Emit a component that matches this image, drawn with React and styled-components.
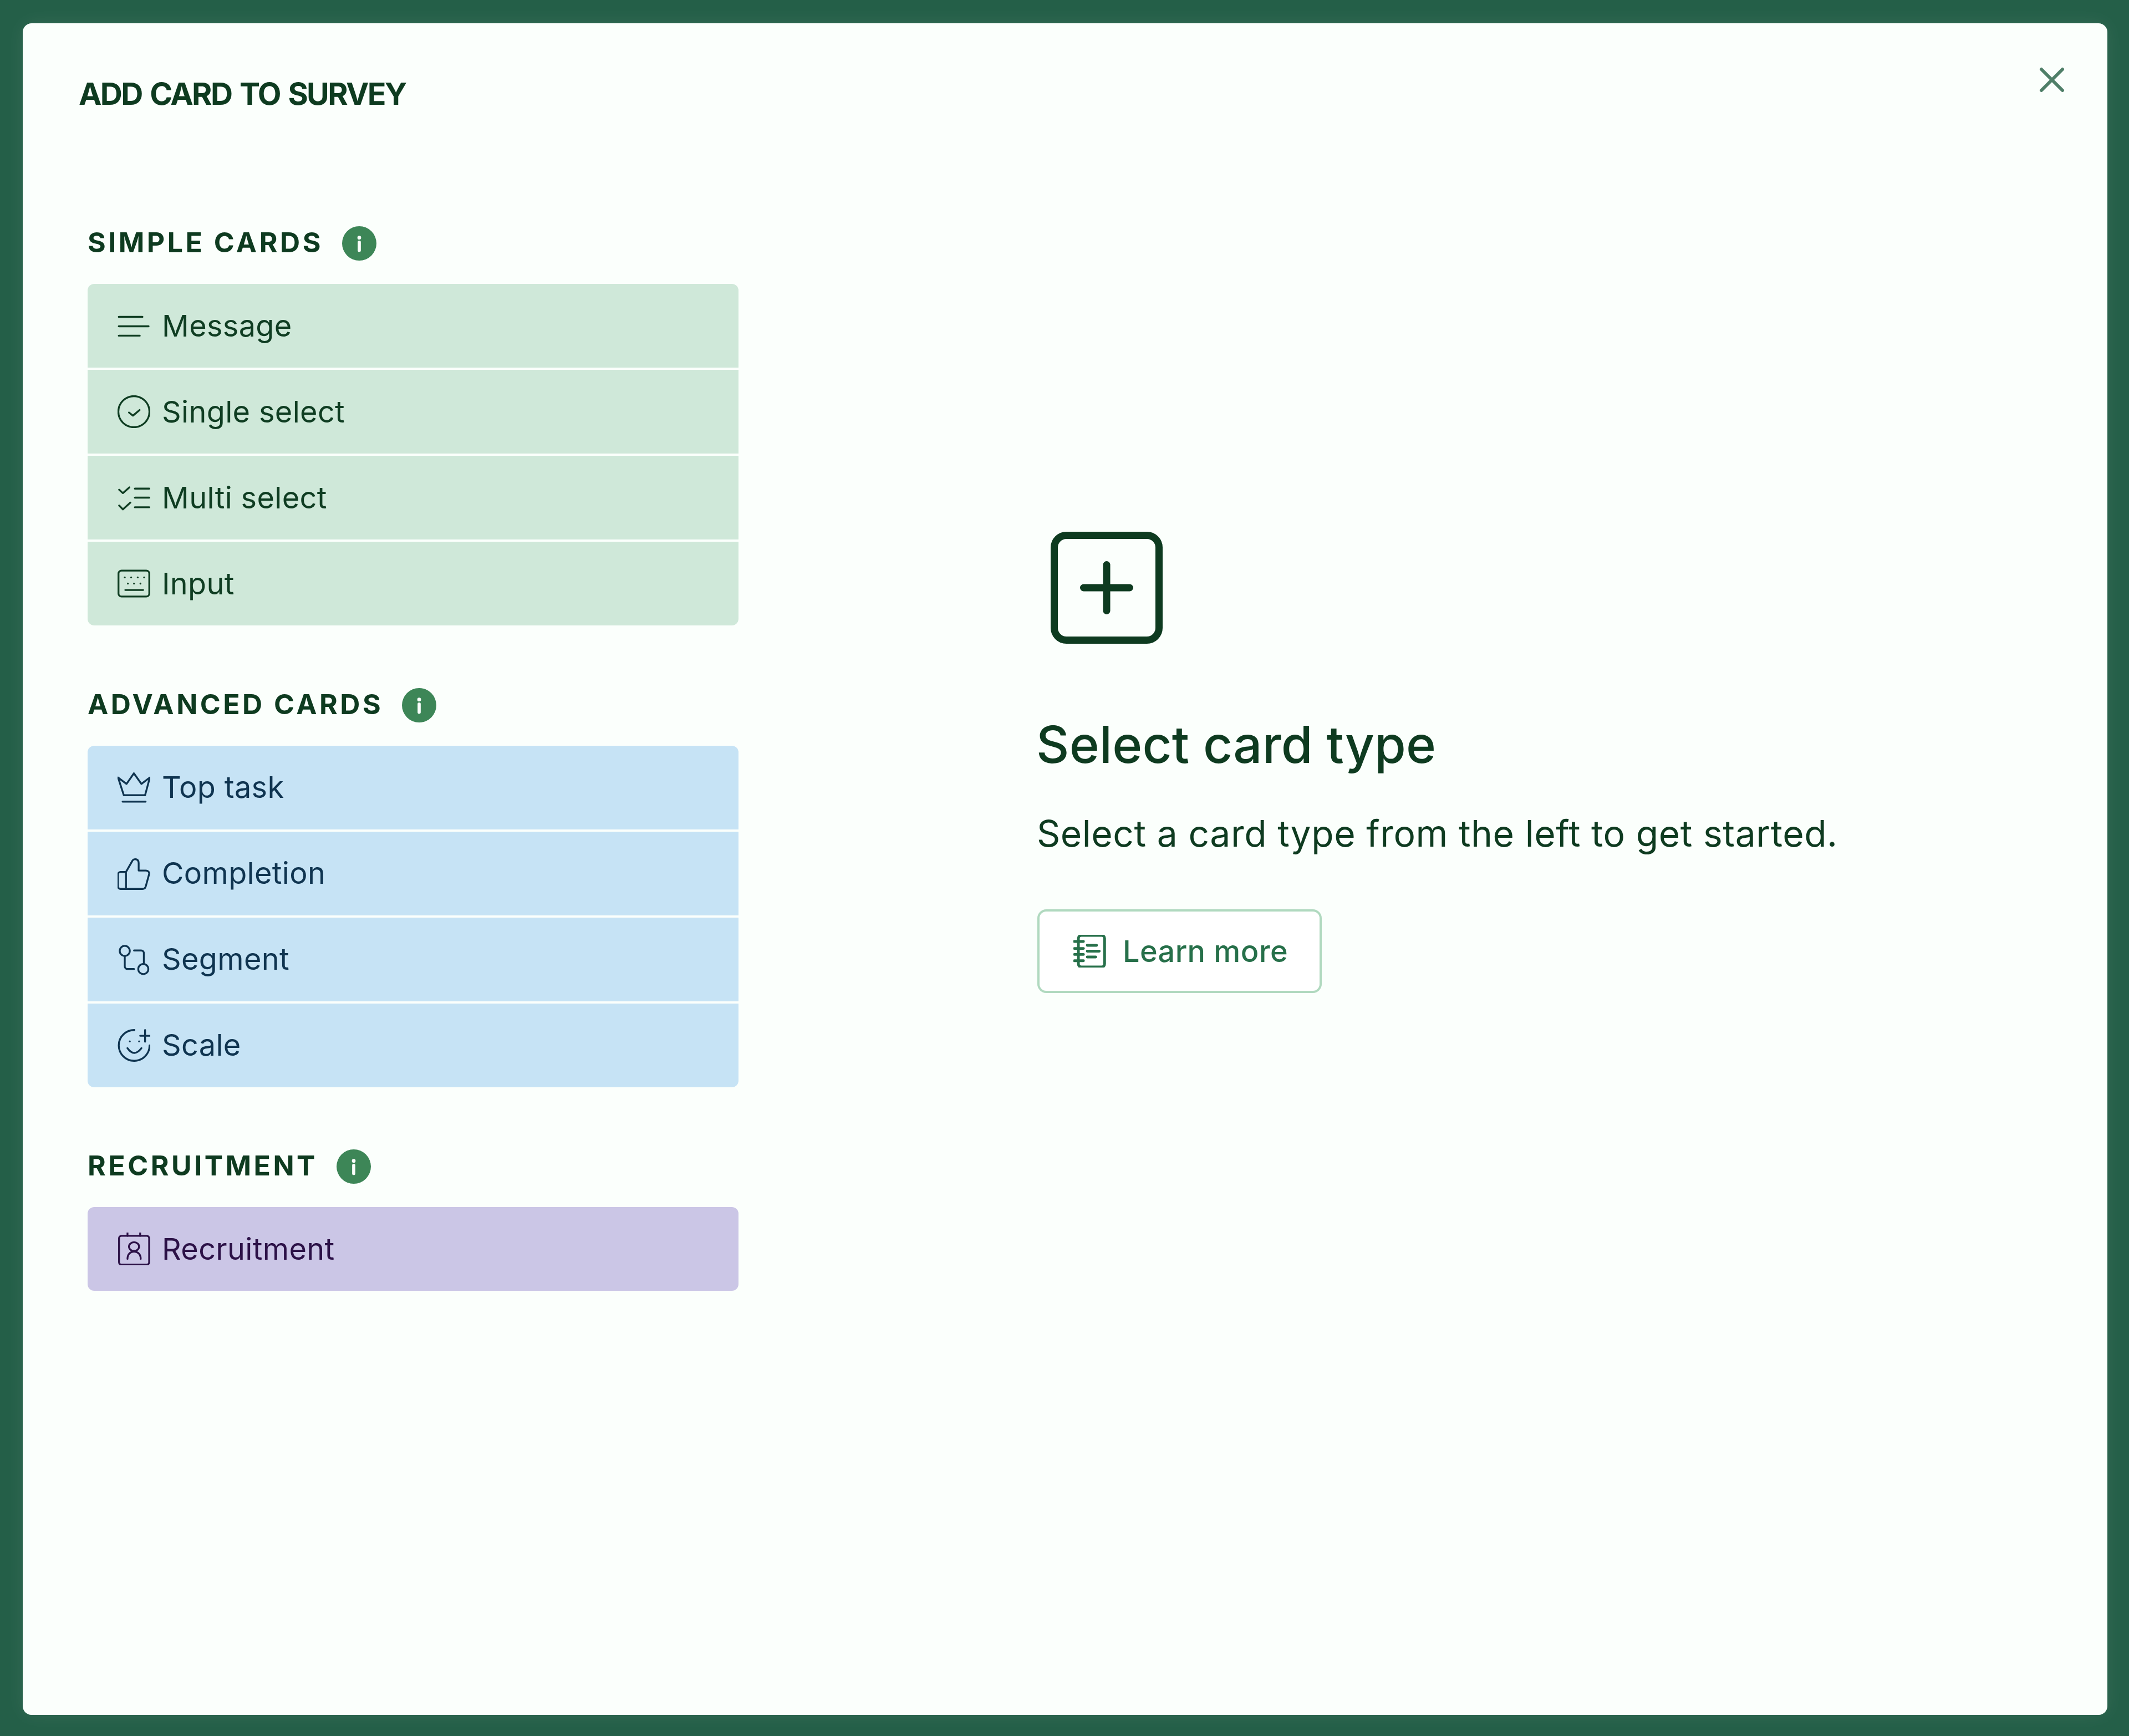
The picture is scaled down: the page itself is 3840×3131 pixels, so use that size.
import React from "react";
import styled, { createGlobalStyle } from "styled-components";

const GlobalStyle = createGlobalStyle`
  html, body {
    margin: 0;
    padding: 0;
    background: #245f48;
  }
  * {
    box-sizing: border-box;
  }
`;

const palette = {
  green: { bg: "#cfe8d9", text: "#0f3d22" },
  blue: { bg: "#c6e3f5", text: "#0f3450" },
  purple: { bg: "#cbc6e6", text: "#2c1147" },
};

const Page = styled.div`
  width: 3840px;
  height: 3131px;
  padding: 42px 39px 38px 41px;
  background: #245f48;
  font-family: Inter, "Liberation Sans", sans-serif;
  color: #0e3b20;
`;

const Modal = styled.div`
  position: relative;
  height: 100%;
  padding: 92px 0 0 101px;
  background: #fbfffc;
  border-radius: 16px;
  box-shadow: 0 0 36px rgba(255, 255, 255, 0.07);
`;

const Title = styled.h1`
  margin: 0;
  font-size: 55.5px;
  line-height: 70px;
  font-weight: 700;
  letter-spacing: -2.6px;
  word-spacing: 4px;
`;

const CloseButton = styled.button`
  position: absolute;
  top: 78px;
  right: 76px;
  width: 48px;
  height: 48px;
  padding: 0;
  border: 0;
  background: none;
  color: #4f7f68;
  svg {
    display: block;
  }
`;

const Body = styled.div`
  display: grid;
  grid-template-columns: 1174px 1fr;
  column-gap: 539px;
  margin-top: 204px;
  padding-left: 16px;
`;

const Sections = styled.div`
  display: flex;
  flex-direction: column;
  gap: 112.5px;
`;

const SectionHead = styled.div`
  display: flex;
  align-items: center;
  gap: 34px;
  height: 62px;
  margin-bottom: 42px;
`;

const SectionTitle = styled.h2`
  margin: 0;
  padding-bottom: 4px;
  font-size: 50px;
  line-height: 62px;
  font-weight: 700;
  letter-spacing: 4.5px;
`;

const InfoBadge = styled.svg`
  display: block;
  width: 62px;
  height: 62px;
  flex: none;
`;

const Rows = styled.div`
  display: flex;
  flex-direction: column;
  gap: 4px;
  border-radius: 12px;
  overflow: hidden;
`;

const Row = styled.div`
  display: flex;
  align-items: center;
  gap: 21px;
  height: 151px;
  padding-left: 54px;
  background: ${(p) => palette[p.$tone].bg};
  color: ${(p) => palette[p.$tone].text};
  font-size: 54px;
  line-height: 70px;
  letter-spacing: 0.35px;
`;

const Icon = styled.svg`
  display: block;
  width: 59px;
  height: 59px;
  flex: none;
  fill: none;
  stroke: currentColor;
  stroke-width: 1.35;
  stroke-linecap: round;
  stroke-linejoin: round;
`;

const Intro = styled.div`
  display: flex;
  flex-direction: column;
  align-items: flex-start;
  padding-top: 551px;
`;

const PlusIcon = styled.svg`
  display: block;
  width: 202px;
  height: 202px;
  margin-left: 24px;
  fill: none;
  stroke: #0e3b20;
  stroke-linecap: round;
`;

const IntroTitle = styled.h2`
  margin: 132px 0 0 -2px;
  font-size: 92px;
  line-height: 100px;
  font-weight: 500;
  letter-spacing: 0.2px;
`;

const IntroText = styled.p`
  margin: 65px 0 0 -1px;
  font-size: 66px;
  line-height: 90px;
  font-weight: 400;
  letter-spacing: 0.52px;
`;

const LearnButton = styled.button`
  display: flex;
  align-items: center;
  gap: 30px;
  width: 513px;
  height: 151px;
  margin-top: 92px;
  padding: 0 0 0 61px;
  background: #fff;
  border: 4px solid #b0d9bf;
  border-radius: 16px;
  color: #27704a;
  font-family: inherit;
  font-size: 54px;
  font-weight: 500;
  letter-spacing: 0.4px;
`;

const BookIcon = styled.svg`
  display: block;
  width: 59px;
  height: 59px;
  flex: none;
  fill: none;
  stroke: currentColor;
  stroke-width: 2;
  stroke-linecap: round;
  stroke-linejoin: round;
`;

const Info = () => (
  <InfoBadge viewBox="0 0 24 24">
    <circle cx="12" cy="12" r="12" fill="#3d8657" />
    <circle cx="12" cy="8" r="1.3" fill="#fcfffd" />
    <path d="M12 11.2v5.6" stroke="#fcfffd" strokeWidth="2.2" strokeLinecap="round" />
  </InfoBadge>
);

const icons = {
  message: (
    <path d="M.9 5.5h17.4M.9 12.4h21.9M.9 19.3h15.4" />
  ),
  single: (
    <>
      <circle cx="12" cy="12" r="11.4" />
      <path d="M8.4 12.6l2.9 2.3 4.9-4.1" />
    </>
  ),
  multi: (
    <path d="M1.2 6.2l2.7 2.5 4.8-4.2M1.2 17.8l2.7 2.8 5.5-4.9M12.7 5.4h10.6M12.7 12h10.6M12.7 19.1h10.6" />
  ),
  input: (
    <>
      <rect x=".7" y="2.5" width="22.6" height="19" rx="2.2" />
      <path d="M5.3 7.5h.01M10 7.5h.01M14.8 7.5h.01M19.5 7.5h.01M7.6 12h.01M12.1 12h.01M16.8 12h.01M5.7 16.7h13.1" />
    </>
  ),
  crown: (
    <path d="M.4 4.6l4.2 13h15.6l3.5-13-6.2 4.7L12 1.5 6.6 9.3zM3.7 22.3h16.9" />
  ),
  thumb: (
    <path d="M6.2 10.8l4.6-8c.8-2 4.7-1.9 4.7 1.5v5.5h5.4c1.6 0 2.7 1.4 2.2 2.9l-2.4 8.7c-.3 1.2-1.3 1.9-2.4 1.9H2.2c-1 0-1.8-.8-1.8-1.8v-8.9c0-1 .8-1.8 1.8-1.8zM6.2 10.8v12.5" />
  ),
  segment: (
    <>
      <circle cx="5.3" cy="5.7" r="3.7" />
      <circle cx="18.9" cy="19" r="3.7" />
      <path d="M5.3 9.6v7.4c0 1.2.8 2 2 2h4.8M12.1 5.4h5.2c1.2 0 2 .8 2 2v7.4" />
    </>
  ),
  scale: (
    <>
      <path d="M12.4.7A11.3 11.3 0 1 0 23.5 12M16.6 4.9H24M20.2.7v8.6M9 9h.01M15.8 9h.01M7.3 14q5 7 10.2 0" />
    </>
  ),
  recruit: (
    <>
      <rect x="1.1" y="2.4" width="22.1" height="21.2" rx="1.8" />
      <path d="M7.3.2v2.2M16.6.2v2.2M7.3 19.3c0-3.6 2.2-5.3 4.8-5.3s4.9 1.7 4.9 5.3" />
      <ellipse cx="12.1" cy="10.3" rx="3.7" ry="3.2" />
    </>
  ),
};

const sections = [
  {
    title: "SIMPLE CARDS",
    tone: "green",
    cards: [
      { label: "Message", icon: "message" },
      { label: "Single select", icon: "single" },
      { label: "Multi select", icon: "multi" },
      { label: "Input", icon: "input" },
    ],
  },
  {
    title: "ADVANCED CARDS",
    tone: "blue",
    cards: [
      { label: "Top task", icon: "crown" },
      { label: "Completion", icon: "thumb" },
      { label: "Segment", icon: "segment" },
      { label: "Scale", icon: "scale" },
    ],
  },
  {
    title: "RECRUITMENT",
    tone: "purple",
    cards: [{ label: "Recruitment", icon: "recruit" }],
  },
];

const App = () => (
  <Page>
    <GlobalStyle />
    <Modal>
      <Title>ADD CARD TO SURVEY</Title>
      <CloseButton aria-label="Close">
        <svg width="48" height="48" viewBox="0 0 48 48" fill="none" stroke="currentColor" strokeWidth="6" strokeLinecap="round">
          <path d="M5 5l38 38M43 5L5 43" />
        </svg>
      </CloseButton>
      <Body>
        <Sections>
          {sections.map((section) => (
            <section key={section.title}>
              <SectionHead>
                <SectionTitle>{section.title}</SectionTitle>
                <Info />
              </SectionHead>
              <Rows>
                {section.cards.map((card) => (
                  <Row key={card.label} $tone={section.tone}>
                    <Icon viewBox="0 0 24 24">{icons[card.icon]}</Icon>
                    {card.label}
                  </Row>
                ))}
              </Rows>
            </section>
          ))}
        </Sections>
        <Intro>
          <PlusIcon viewBox="0 0 202 202">
            <rect x="6.5" y="6.5" width="189" height="189" rx="22" strokeWidth="13" />
            <path d="M59.5 101h83M101 59.5v83" strokeWidth="13" />
          </PlusIcon>
          <IntroTitle>Select card type</IntroTitle>
          <IntroText>Select a card type from the left to get started.</IntroText>
          <LearnButton>
            <BookIcon viewBox="0 0 24 24">
              <rect x="3.7" y=".4" width="19.2" height="23.2" rx="2.2" />
              <path d="M.8 4.9h6.6M.8 10h6.6M.8 14.4h6.6M.8 19h6.6M10.2 7.7h6.8M10.2 12h8.8M10.2 16.3h6.2" />
            </BookIcon>
            Learn more
          </LearnButton>
        </Intro>
      </Body>
    </Modal>
  </Page>
);

export default App;
